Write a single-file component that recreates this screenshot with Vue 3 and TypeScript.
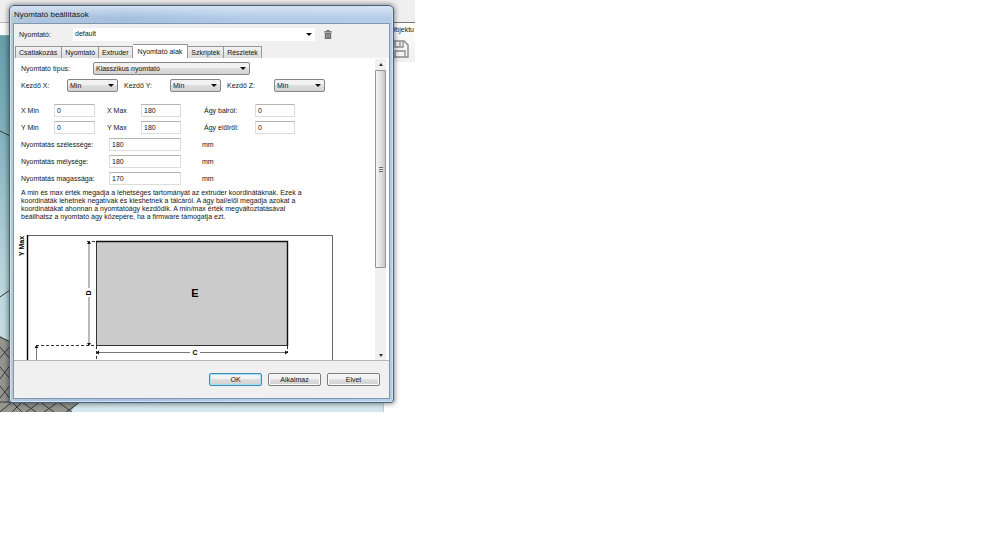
<script setup lang="ts">
import { ref } from 'vue'

interface Field {
  id: string
  label: string
  value: string
}

const printer = ref('default')
const printerType = ref('Klasszikus nyomtató')
const tabs = ['Csatlakozás', 'Nyomtató', 'Extruder', 'Nyomtató alak', 'Szkriptek', 'Részletek']
const activeTab = ref('Nyomtató alak')

const homes = ref<Field[]>([
  { id: 'home-x', label: 'Kezdő X:', value: 'Min' },
  { id: 'home-y', label: 'Kezdő Y:', value: 'Min' },
  { id: 'home-z', label: 'Kezdő Z:', value: 'Min' },
])

const limits = ref<Field[]>([
  { id: 'x-min', label: 'X Min', value: '0' },
  { id: 'x-max', label: 'X Max', value: '180' },
  { id: 'bed-left', label: 'Ágy balról:', value: '0' },
  { id: 'y-min', label: 'Y Min', value: '0' },
  { id: 'y-max', label: 'Y Max', value: '180' },
  { id: 'bed-front', label: 'Ágy előlről:', value: '0' },
])

const sizes = ref<Field[]>([
  { id: 'width', label: 'Nyomtatás szélessége:', value: '180' },
  { id: 'depth', label: 'Nyomtatás mélysége:', value: '180' },
  { id: 'height', label: 'Nyomtatás magassága:', value: '170' },
])

const help = [
  'A min és max érték megadja a lehetséges tartományát az extruder koordinátáknak. Ezek a',
  'koordináták lehetnek negatívak és kieshetnek a tálcáról. A ágy bal/elől megadja azokat a',
  'koordinátákat ahonnan a nyomtatóágy kezdődik. A min/max érték megváltoztatásával',
  'beállhatsz a nyomtató ágy közepére, ha a firmware támogatja ezt.',
]
</script>

<template>
  <main class="desktop">
    <div class="backdrop">
      <div class="viewport">
        <div class="menubar"></div>
        <div class="toolstrip"></div>
        <svg class="bed" viewBox="0 0 384 376" preserveAspectRatio="xMinYMax slice" aria-hidden="true">
          <path d="M0 300L12 306V362H82L70 376H0Z" fill="#92968f" />
          <path
            d="M0 95L10 100M0 261L10 254M0 301L10 306M0 322L11 309M0 311L11 324M0 343L11 328M0 331L11 344M0 362L11 348M0 350L11 364M0 376L12 366L22 376M12 376L22 366M22 366L36 376M26 376L40 366L54 376M44 376L58 366L72 376M66 376L80 366M0 366H82"
            fill="none"
            stroke="#363a38"
            stroke-width="1"
          />
        </svg>
      </div>
      <div class="side">
        <div class="side-top"></div>
        <div class="side-tools">
          <span class="side-label">Objektu</span>
          <svg class="floppy" viewBox="0 0 18 18" aria-hidden="true">
            <path d="M1 1H13L17 5V17H1Z" fill="#f3f3f3" stroke="#8b8b8b" stroke-width="1.4" />
            <path d="M4 1V7H12V1M9 2V6M4 17V11H14V17" fill="none" stroke="#8b8b8b" stroke-width="1.3" />
          </svg>
        </div>
      </div>
    </div>

    <section class="dialog" role="dialog" aria-labelledby="dialog-title">
      <h1 id="dialog-title" class="title">Nyomtató beállítások</h1>
      <form class="client" @submit.prevent>
        <div class="printer-row">
          <label for="printer">Nyomtató:</label>
          <span class="select flat">
            <select id="printer" v-model="printer">
              <option>default</option>
            </select>
          </span>
          <button type="button" class="trash" aria-label="Törlés">
            <svg viewBox="0 0 8 9" aria-hidden="true">
              <path d="M0 1.2H2.5V0H5.5V1.2H8V2.4H0ZM.8 3H7.2V9H.8Z" fill="#6e6e6e" />
              <path d="M2.5 4V8M4 4V8M5.5 4V8" stroke="#b5b5b5" stroke-width=".6" />
            </svg>
          </button>
        </div>

        <div class="tabs" role="tablist">
          <button
            v-for="tab in tabs"
            :key="tab"
            type="button"
            role="tab"
            class="tab"
            :class="{ active: tab === activeTab }"
            :aria-selected="tab === activeTab"
            @click="activeTab = tab"
          >
            {{ tab }}
          </button>
        </div>

        <div class="panel">
          <div class="content">
            <div class="type-row">
              <label for="printer-type">Nyomtató típus:</label>
              <span class="select">
                <select id="printer-type" v-model="printerType">
                  <option>Klasszikus nyomtató</option>
                </select>
              </span>
            </div>

            <div class="home-row">
              <template v-for="home in homes" :key="home.id">
                <label :for="home.id">{{ home.label }}</label>
                <span class="select">
                  <select :id="home.id" v-model="home.value">
                    <option>Min</option>
                    <option>Max</option>
                  </select>
                </span>
              </template>
            </div>

            <div class="limits">
              <template v-for="limit in limits" :key="limit.id">
                <label :for="limit.id">{{ limit.label }}</label>
                <input :id="limit.id" v-model="limit.value" type="text" />
              </template>
            </div>

            <div class="sizes">
              <template v-for="size in sizes" :key="size.id">
                <label :for="size.id">{{ size.label }}</label>
                <input :id="size.id" v-model="size.value" type="text" />
                <span>mm</span>
              </template>
            </div>

            <p class="help">
              <span v-for="line in help" :key="line">{{ line }}</span>
            </p>

            <svg class="diagram" viewBox="0 0 361 127" role="img" aria-label="Nyomtatóágy rajza">
              <path d="M13 1.5H318.500V127" fill="none" stroke="#666" />
              <path d="M13.500 1V127" stroke="#000" stroke-width="1.4" />
              <rect x="82.500" y="7.500" width="191" height="104" fill="#cbcbcb" stroke="#333" />
              <path d="M82 7.500H273.500V112" fill="none" stroke="#111" stroke-width="1.4" />
              <path d="M75 8V54M75 63V110M83 118.500H176M186 118.500H273M22.500 113V127" fill="none" stroke="#777" />
              <path d="M73 7.500H82M22 111.500H82M82.500 112V127M273.500 112V119" fill="none" stroke="#333" stroke-dasharray="3 2" />
              <path d="M75 7L77 10H73ZM75 112L77 109H73ZM82 118.500L85 116.500V120.500ZM274 118.500L271 116.500V120.500ZM22.500 111L24.500 114H20.500Z" fill="#111" />
              <text class="big" x="181" y="63">E</text>
              <text class="mark" x="181" y="121">C</text>
              <text class="mark" transform="translate(77 59) rotate(-90)">D</text>
              <text class="axis" transform="translate(10 12) rotate(-90)">Y Max</text>
            </svg>
          </div>
          <div class="scrollbar" aria-hidden="true">
            <span class="arrow up"></span>
            <span class="thumb"><i class="grip"></i></span>
            <span class="arrow down"></span>
          </div>
        </div>

        <footer class="actions">
          <button type="submit" class="push primary">OK</button>
          <button type="button" class="push">Alkalmaz</button>
          <button type="button" class="push">Elvet</button>
        </footer>
      </form>
    </section>
  </main>
</template>

<style>
body {
  margin: 0;
  background: #fff;
}
</style>

<style scoped>
* {
  box-sizing: border-box;
}

.desktop {
  display: grid;
  max-width: 415px;
  overflow: hidden;
  color: #161616;
  font: 7px/9px "Liberation Sans", Arial, sans-serif;
}

.backdrop,
.dialog {
  grid-area: 1 / 1;
}

.backdrop {
  display: grid;
  grid-template-columns: 1fr 31px;
}

.viewport {
  display: grid;
  grid-template-rows: 23px 13px 1fr;
  border-right: 1px solid #c8c8c8;
  background: linear-gradient(#659eab 36px, #79acb8 110px, #b5d3da 260px, #d3e7ec);
}

.menubar {
  margin-right: -1px;
  background: #efefef;
  border-bottom: 1px solid #b5b5b5;
}

.toolstrip {
  background: #fafafa;
  border-bottom: 1px solid #88a7b0;
}

.bed {
  width: 100%;
  height: 100%;
  min-height: 0;
}

.side {
  display: grid;
  grid-template-rows: 23px 39px 1fr;
}

.side-top {
  background: #efefef;
  border-bottom: 1px solid #777;
}

.side-tools {
  display: grid;
  grid-template-rows: 17px 1fr;
  justify-items: end;
  padding-right: 1px;
  background: linear-gradient(#fdfdfd, #f0f0f0);
}

.side-label {
  padding-top: 2px;
  white-space: nowrap;
}

.floppy {
  width: 18px;
  height: 18px;
  margin-right: 5px;
}

.dialog {
  margin: 5px 21px 9px 9px;
  padding: 0 4px 4px;
  border: 1px solid #48617e;
  border-radius: 5px 5px 3px 3px;
  background: linear-gradient(180deg, #ffffff80, #ffffff00 12px), linear-gradient(90deg, #b4c8de, #a4bfe0 30%, #b2cae8 60%, #b5cdea);
  box-shadow: inset 0 0 0 1px #d3e2f2, 0 0 5px 1px #00000070;
}

.title {
  margin: 0;
  padding: 4px 0;
  font-size: 8px;
  line-height: 10px;
  font-weight: 400;
}

.client {
  background: #f0f0f0;
  box-shadow: 0 0 0 1px #8295ae;
}

.printer-row {
  display: grid;
  grid-template-columns: 54px 242px 17px;
  align-items: center;
  height: 20px;
  padding-left: 5px;
}

label {
  white-space: nowrap;
}

.trash {
  display: grid;
  justify-content: end;
  padding: 0;
  border: 0;
  background: none;
}

.trash svg {
  width: 8px;
  height: 9px;
}

.select {
  display: grid;
  align-items: center;
  justify-items: end;
}

.select::after {
  grid-area: 1 / 1;
  margin-right: 4px;
  border: 3px solid transparent;
  border-top: 3px solid #111;
  border-bottom: 0;
  content: "";
  pointer-events: none;
}

select {
  grid-area: 1 / 1;
  width: 100%;
  height: 13px;
  padding: 0 0 0 2px;
  border: 1px solid #858585;
  border-radius: 2px;
  appearance: none;
  background: linear-gradient(#f2f2f2 45%, #dedede 50%, #d2d2d2);
  color: inherit;
  font: inherit;
}

.flat select {
  padding: 0 0 1px 1px;
  border-color: #fff;
  border-radius: 0;
  background: #fff;
}

.flat::after {
  margin-right: 3px;
}

.tabs {
  display: flex;
  align-items: flex-end;
  height: 14px;
  padding-left: 1px;
}

.tab {
  height: 12px;
  padding: 0 3px;
  border: 1px solid #969696;
  border-bottom: 0;
  border-left: 0;
  background: linear-gradient(#f3f3f3, #dcdcdc);
  color: inherit;
  font: inherit;
  white-space: nowrap;
}

.tab:first-child {
  padding: 0 4px 0 3px;
  border-left: 1px solid #969696;
}

.tab.active {
  height: 14px;
  padding: 0 5px;
  background: #fff;
}

.panel {
  display: grid;
  grid-template-columns: 1fr 11px;
  height: 303px;
  padding: 1px 3px 0 0;
  border-bottom: 1px solid #b5b5b5;
  background: #fff;
  overflow: hidden;
}

.content {
  min-width: 0;
  padding: 3px 0 0 7px;
}

.type-row {
  display: grid;
  grid-template-columns: 72px 157px;
  align-items: center;
}

.home-row {
  display: grid;
  grid-template-columns: 46px 51px 52px 51px 53px 51px;
  align-items: center;
  margin-top: 4px;
}

.home-row label:not(:first-child) {
  padding-left: 6px;
}

.limits {
  display: grid;
  grid-template-columns: 33px 41px 46px 40px 74px 40px;
  row-gap: 4px;
  align-items: center;
  margin-top: 12px;
}

.limits label:nth-of-type(3n + 2) {
  padding-left: 12px;
}

.limits label:nth-of-type(3n) {
  padding-left: 23px;
}

input {
  width: 100%;
  height: 13px;
  padding: 0 2px;
  border: 1px solid #dcdcdc;
  border-top-color: #b4b4b4;
  background: #fff;
  color: inherit;
  font: inherit;
}

.sizes {
  display: grid;
  grid-template-columns: 88px 72px 1fr;
  row-gap: 4px;
  align-items: center;
  margin-top: 4px;
}

.sizes span {
  padding-left: 21px;
}

.help {
  display: grid;
  margin: 4px 0 0;
  line-height: 8px;
  white-space: nowrap;
}

.diagram {
  display: block;
  width: 361px;
  height: 127px;
  margin: 13px 0 0 -7px;
}

.diagram text {
  font-family: "Liberation Sans", Arial, sans-serif;
  font-weight: 700;
  text-anchor: middle;
}

.big {
  font-size: 11px;
}

.mark,
.axis {
  font-size: 7px;
}

.scrollbar {
  display: grid;
  grid-template-rows: 11px 198px 1fr;
  background: #f0f0f0;
}

.arrow {
  align-self: center;
  justify-self: center;
  border: 2px solid transparent;
}

.up {
  border-top: 0;
  border-bottom: 3px solid #333;
}

.down {
  align-self: end;
  margin-bottom: 4px;
  border-top: 3px solid #333;
  border-bottom: 0;
}

.thumb {
  display: grid;
  place-items: center;
  border: 1px solid #949494;
  border-radius: 1px;
  background: linear-gradient(90deg, #f5f5f5, #e4e4e6 45%, #c6c6ca);
}

.grip {
  width: 4px;
  height: 5px;
  background: repeating-linear-gradient(#666 0 1px, #eee 1px 2px);
}

.actions {
  display: flex;
  justify-content: flex-end;
  gap: 6px;
  padding: 12px 9px 12px 0;
}

.push {
  width: 53px;
  height: 13px;
  padding: 0;
  border: 1px solid #7c7c7c;
  border-radius: 2px;
  background: linear-gradient(#f3f3f3 45%, #dedede 50%, #d0d0d0);
  box-shadow: inset 0 0 0 1px #fafafa;
  color: inherit;
  font: inherit;
}

.primary {
  border-color: #3c8cab;
  box-shadow: inset 0 0 0 1px #a3e2f6;
}
</style>
